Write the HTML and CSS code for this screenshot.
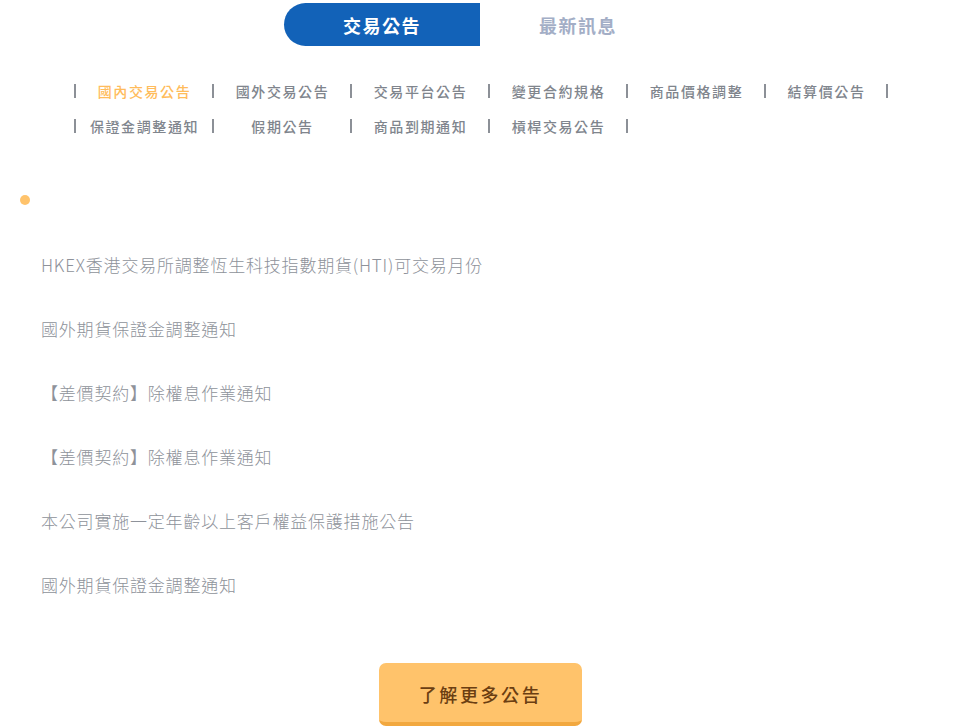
FILE: index.html
```html
<!DOCTYPE html>
<html lang="zh-Hant">
<head>
<meta charset="utf-8">
<title>交易公告</title>
<link rel="stylesheet" href="styles.css">
</head>
<body>
<div class="page">
  <div class="tabs">
    <div class="tab tab-active">交易公告</div>
    <div class="tab">最新訊息</div>
  </div>

  <nav class="cats">
    <div class="cat-row">
      <span class="sep"></span>
      <a class="cat cat-active">國內交易公告</a>
      <span class="sep"></span>
      <a class="cat">國外交易公告</a>
      <span class="sep"></span>
      <a class="cat">交易平台公告</a>
      <span class="sep"></span>
      <a class="cat">變更合約規格</a>
      <span class="sep"></span>
      <a class="cat">商品價格調整</a>
      <span class="sep"></span>
      <a class="cat cat-narrow">結算價公告</a>
      <span class="sep"></span>
    </div>
    <div class="cat-row">
      <span class="sep"></span>
      <a class="cat">保證金調整通知</a>
      <span class="sep"></span>
      <a class="cat">假期公告</a>
      <span class="sep"></span>
      <a class="cat">商品到期通知</a>
      <span class="sep"></span>
      <a class="cat">槓桿交易公告</a>
      <span class="sep"></span>
    </div>
  </nav>

  <div class="dot"></div>

  <ul class="news">
    <li>HKEX香港交易所調整恆生科技指數期貨(HTI)可交易月份</li>
    <li>國外期貨保證金調整通知</li>
    <li>【差價契約】除權息作業通知</li>
    <li>【差價契約】除權息作業通知</li>
    <li>本公司實施一定年齡以上客戶權益保護措施公告</li>
    <li>國外期貨保證金調整通知</li>
  </ul>

  <div class="more-wrap">
    <a class="more">了解更多公告</a>
  </div>
</div>
</body>
</html>
```

FILE: styles.css
```css
* { box-sizing: border-box; }
html, body {
  margin: 0;
  padding: 0;
  background: #ffffff;
}
body {
  font-family: "Noto Sans CJK TC", "Noto Sans", sans-serif;
  width: 960px;
  height: 728px;
  overflow: hidden;
}
.page {
  padding-top: 3px;
}
.tabs {
  display: flex;
  justify-content: center;
}
.tab {
  width: 196px;
  height: 43px;
  display: flex;
  align-items: center;
  justify-content: center;
  font-size: 18px;
  font-weight: 700;
  letter-spacing: 1.5px;
  color: #a3aec6;
}
.tab-active {
  background: #1262b8;
  color: #ffffff;
  border-radius: 22px 0 0 22px;
}

.cats {
  margin-top: 27px;
  padding-left: 74px;
}
.cat-row {
  display: flex;
  align-items: center;
  height: 35px;
}
.sep {
  width: 2px;
  height: 14px;
  background: #8c9097;
  flex: none;
}
.cat {
  width: 136px;
  text-align: center;
  font-size: 14px;
  font-weight: 500;
  letter-spacing: 1.6px;
  color: #80858d;
  padding-left: 1px;
}
.cat-narrow { width: 120px; }
.cat-active { color: #ffbc5c; }

.dot {
  width: 10px;
  height: 10px;
  border-radius: 50%;
  background: #ffc36b;
  margin: 52px 0 0 20px;
}

.news {
  list-style: none;
  margin: 27px 0 0;
  padding: 0 0 0 41px;
}
.news li {
  height: 64px;
  display: flex;
  align-items: center;
  font-size: 17px;
  font-weight: 300;
  letter-spacing: 0.8px;
  color: #8e929a;
}

.more-wrap {
  display: flex;
  justify-content: center;
  margin-top: 47px;
  padding-left: 1px;
}
.more {
  width: 203px;
  height: 63px;
  background: #ffc36b;
  border-radius: 7px;
  border-bottom: 4px solid #f2a83f;
  display: flex;
  align-items: center;
  justify-content: center;
  font-size: 18px;
  font-weight: 500;
  letter-spacing: 2.6px;
  color: #6b3e12;
  padding-top: 2px;
}
```
